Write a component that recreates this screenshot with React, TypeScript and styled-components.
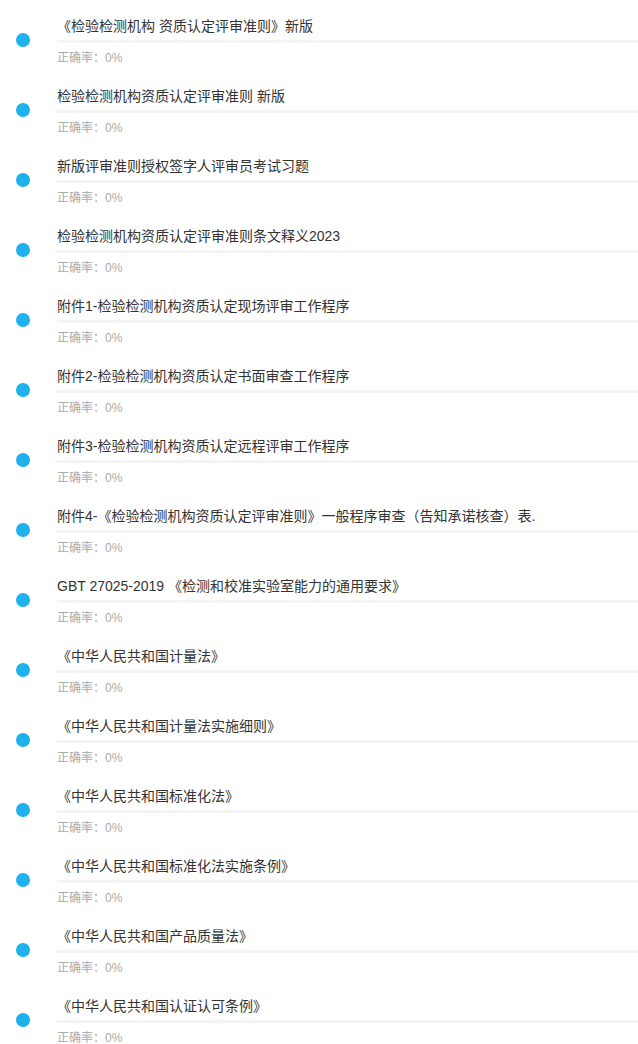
import React from "react";
import styled, { createGlobalStyle } from "styled-components";

const Global = createGlobalStyle`
  html, body { margin: 0; padding: 0; background: #fff; }
  body { font-family: "Liberation Sans", "Noto Sans CJK SC", sans-serif; }
`;

const List = styled.div`
  display: flex;
  flex-direction: column;
  width: 638px;
`;

const Item = styled.div`
  display: flex;
  height: 70px;
`;

const DotCol = styled.div`
  width: 57px;
  flex: none;
  display: flex;
  justify-content: flex-start;
  align-items: flex-start;
`;

const Dot = styled.span`
  width: 14px;
  height: 14px;
  border-radius: 50%;
  background: #1eb1ee;
  margin: 33px 0 0 16px;
`;

const Body = styled.div`
  flex: 1;
  display: flex;
  flex-direction: column;
  padding-top: 16px;
`;

const Title = styled.div`
  font-size: 14px;
  line-height: 20px;
  height: 20px;
  color: #333;
  white-space: nowrap;
`;

const Bar = styled.div`
  height: 3px;
  margin-top: 4px;
  background: #f4f4f4;
`;

const Rate = styled.div`
  margin-top: 7px;
  font-size: 12px;
  line-height: 14px;
  color: #aaa;
`;

const Colon = styled.span`
  font-family: "Noto Sans CJK SC", sans-serif;
`;

const titles = [
  "《检验检测机构 资质认定评审准则》新版",
  "检验检测机构资质认定评审准则 新版",
  "新版评审准则授权签字人评审员考试习题",
  "检验检测机构资质认定评审准则条文释义2023",
  "附件1-检验检测机构资质认定现场评审工作程序",
  "附件2-检验检测机构资质认定书面审查工作程序",
  "附件3-检验检测机构资质认定远程评审工作程序",
  "附件4-《检验检测机构资质认定评审准则》一般程序审查（告知承诺核查）表.",
  "GBT 27025-2019 《检测和校准实验室能力的通用要求》",
  "《中华人民共和国计量法》",
  "《中华人民共和国计量法实施细则》",
  "《中华人民共和国标准化法》",
  "《中华人民共和国标准化法实施条例》",
  "《中华人民共和国产品质量法》",
  "《中华人民共和国认证认可条例》",
];

export default function App() {
  return (
    <>
      <Global />
      <List>
        {titles.map((t, i) => (
          <Item key={i}>
            <DotCol>
              <Dot />
            </DotCol>
            <Body>
              <Title>{t}</Title>
              <Bar />
              <Rate>
                正确率<Colon>：</Colon>0%
              </Rate>
            </Body>
          </Item>
        ))}
      </List>
    </>
  );
}
